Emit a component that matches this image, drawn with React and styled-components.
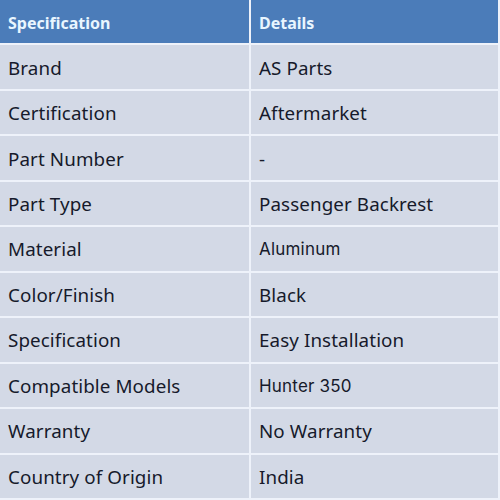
import React from 'react';
import styled, { createGlobalStyle } from 'styled-components';

const GlobalStyle = createGlobalStyle`
  html, body {
    margin: 0;
    padding: 0;
    background: #ffffff;
  }
`;

const Table = styled.div`
  width: 500px;
  height: 500px;
  display: grid;
  grid-template-columns: 249px 247px;
  grid-auto-rows: 1fr;
  gap: 2px 2px;
  background: #eef2fa;
  padding: 0 2px 2px 0;
  box-sizing: border-box;
  font-family: "Noto Sans", "Open Sans", sans-serif;
`;

const HeadCell = styled.div`
  background: #4b7cb9;
  color: #e9f6ff;
  font-weight: 700;
  font-size: 16px;
  display: flex;
  align-items: center;
  padding: 3px 0 0 8px;
`;

const Cell = styled.div`
  background: #d3d9e6;
  color: #161a2b;
  font-size: ${p => (p.$alt ? '17px' : '18.8px')};
  font-family: ${p => (p.$alt ? 'Inter, "Noto Sans", sans-serif' : 'inherit')};
  display: flex;
  align-items: center;
  padding: 1px 0 0 8px;
  letter-spacing: ${p => (p.$alt ? '0.2px' : '0.1px')};
`;

const rows = [
  ['Brand', 'AS Parts'],
  ['Certification', 'Aftermarket'],
  ['Part Number', '-'],
  ['Part Type', 'Passenger Backrest'],
  ['Material', 'Aluminum', true],
  ['Color/Finish', 'Black'],
  ['Specification', 'Easy Installation'],
  ['Compatible Models', 'Hunter 350', true],
  ['Warranty', 'No Warranty'],
  ['Country of Origin', 'India'],
];

export default function App() {
  return (
    <>
      <GlobalStyle />
      <Table>
        <HeadCell>Specification</HeadCell>
        <HeadCell>Details</HeadCell>
        {rows.map(([k, v, alt]) => (
          <React.Fragment key={k}>
            <Cell>{k}</Cell>
            <Cell $alt={alt}>{v}</Cell>
          </React.Fragment>
        ))}
      </Table>
    </>
  );
}
